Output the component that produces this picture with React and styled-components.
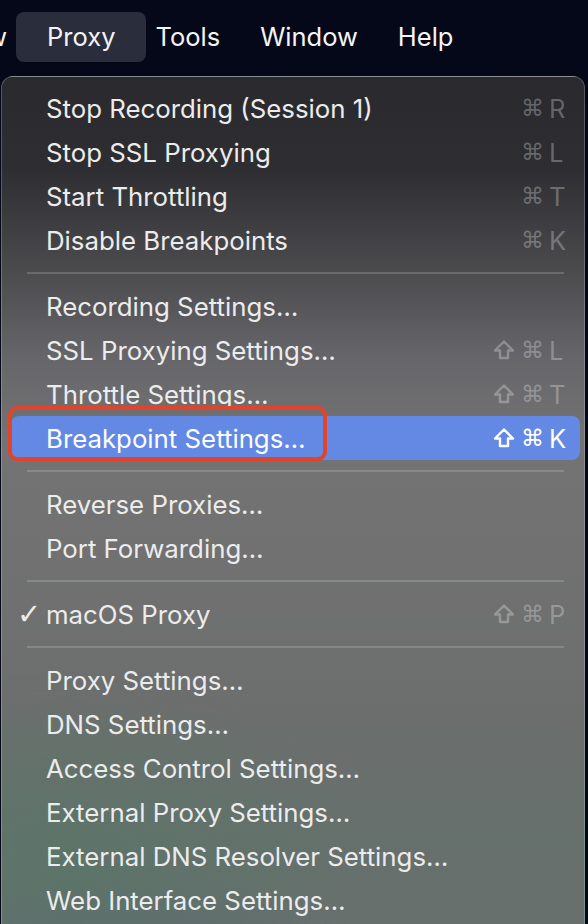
import styled, { createGlobalStyle } from "styled-components";

const Global = createGlobalStyle`
  html, body {
    margin: 0;
    padding: 0;
    background: #050818;
    overflow: hidden;
  }
  body {
    font-family: Inter, "Liberation Sans", "DejaVu Sans", sans-serif;
    -webkit-font-smoothing: antialiased;
  }
`;

const Screen = styled.div`
  width: 588px;
  height: 924px;
  display: flex;
  flex-direction: column;
  overflow: hidden;
`;

const MenuBar = styled.div`
  height: 76px;
  flex-shrink: 0;
  display: flex;
  align-items: center;
  background: #050818;
  padding-bottom: 2px;
  box-sizing: border-box;
`;

const BarItem = styled.div`
  position: relative;
  color: #f4f4f6;
  font-size: 25.5px;
  padding: 0 20px;
  line-height: 50px;
  white-space: nowrap;
  z-index: 0;

  &:first-child {
    margin-left: -72px;
  }

  ${(p) =>
    p.$active &&
    `
    &::before {
      content: "";
      position: absolute;
      top: 0;
      bottom: 0;
      left: -11px;
      right: -11px;
      background: #2a2d3c;
      border-radius: 8px;
      z-index: -1;
    }
  `}
`;

const Panel = styled.div`
  flex: 1;
  margin-left: 1px;
  width: 584px;
  box-sizing: border-box;
  border: 1px solid rgba(255, 255, 255, 0.22);
  border-bottom: none;
  border-radius: 12px 12px 0 0;
  padding-top: 9px;
  display: flex;
  flex-direction: column;
  background:
    radial-gradient(ellipse 300px 200px at 60px 790px, rgba(80, 122, 100, 0.45), transparent),
    radial-gradient(ellipse 280px 150px at 110px 935px, rgba(78, 88, 118, 0.4), transparent),
    linear-gradient(
      180deg,
      #29292e 0px,
      #2e2e32 90px,
      #4a4a4d 190px,
      #66666a 280px,
      #737373 360px,
      #717172 480px,
      #6d6e6e 620px,
      #66706c 760px,
      #6a6f70 924px
    );
`;

const Row = styled.div`
  position: relative;
  height: 44px;
  flex-shrink: 0;
  margin: 0 4px 0 9px;
  padding: 0 13px 0 8px;
  display: flex;
  align-items: center;
  border-radius: 8px;
  color: ${(p) => (p.$selected ? "#ffffff" : "#ececec")};
  background: ${(p) => (p.$selected ? "#6389e4" : "transparent")};
  font-size: 25.8px;
  white-space: nowrap;

  ${(p) =>
    p.$selected &&
    `
    &::after {
      content: "";
      position: absolute;
      top: -10px;
      left: -3px;
      width: 319px;
      height: 55px;
      box-sizing: border-box;
      border: 4px solid #e2432c;
      border-radius: 9px;
    }
  `}
`;

const Check = styled.span`
  width: 27px;
  flex-shrink: 0;
  font-size: 29px;
  font-weight: bold;
  margin-left: -2px;
  margin-right: 2px;
  font-family: "DejaVu Sans", sans-serif;
`;

const Label = styled.span`
  flex: 1;
`;

const Keys = styled.span`
  display: flex;
  align-items: center;
  color: ${(p) => (p.$selected ? "#ffffff" : "rgba(255, 255, 255, 0.28)")};
`;

const Cmd = styled.span`
  font-family: "DejaVu Sans", sans-serif;
  font-size: 23px;
  width: 21px;
  margin-right: 7px;
  text-align: center;
`;

const Letter = styled.span`
  width: 18px;
  font-size: 25.5px;
`;

const ShiftIcon = styled.svg`
  width: 22px;
  height: 22px;
  margin-right: 6px;
`;

const Separator = styled.div`
  height: 22px;
  flex-shrink: 0;
  display: flex;
  align-items: center;
  padding: 0 20px 0 25px;

  &::before {
    content: "";
    flex: 1;
    height: 2px;
    background: rgba(255, 255, 255, 0.17);
  }
`;

const Shift = () => (
  <ShiftIcon viewBox="0 0 22 22">
    <path
      d="M11 2.5 L20 11.5 H15 V19 H7 V11.5 H2 Z"
      fill="none"
      stroke="currentColor"
      strokeWidth="2.4"
      strokeLinejoin="round"
    />
  </ShiftIcon>
);

const menu = [
  { label: "Stop Recording (Session 1)", key: "R" },
  { label: "Stop SSL Proxying", key: "L" },
  { label: "Start Throttling", key: "T" },
  { label: "Disable Breakpoints", key: "K" },
  null,
  { label: "Recording Settings…" },
  { label: "SSL Proxying Settings…", key: "L", shift: true },
  { label: "Throttle Settings…", key: "T", shift: true },
  { label: "Breakpoint Settings…", key: "K", shift: true, selected: true },
  null,
  { label: "Reverse Proxies…" },
  { label: "Port Forwarding…" },
  null,
  { label: "macOS Proxy", key: "P", shift: true, checked: true },
  null,
  { label: "Proxy Settings…" },
  { label: "DNS Settings…" },
  { label: "Access Control Settings…" },
  { label: "External Proxy Settings…" },
  { label: "External DNS Resolver Settings…" },
  { label: "Web Interface Settings…" },
];

export default function App() {
  return (
    <Screen>
      <Global />
      <MenuBar>
        <BarItem>View</BarItem>
        <BarItem $active>Proxy</BarItem>
        <BarItem>Tools</BarItem>
        <BarItem>Window</BarItem>
        <BarItem>Help</BarItem>
      </MenuBar>
      <Panel>
        {menu.map((item, i) =>
          item === null ? (
            <Separator key={i} />
          ) : (
            <Row key={i} $selected={item.selected}>
              <Check>{item.checked ? "✓" : ""}</Check>
              <Label>{item.label}</Label>
              {item.key && (
                <Keys $selected={item.selected}>
                  {item.shift && <Shift />}
                  <Cmd>⌘</Cmd>
                  <Letter>{item.key}</Letter>
                </Keys>
              )}
            </Row>
          )
        )}
      </Panel>
    </Screen>
  );
}
